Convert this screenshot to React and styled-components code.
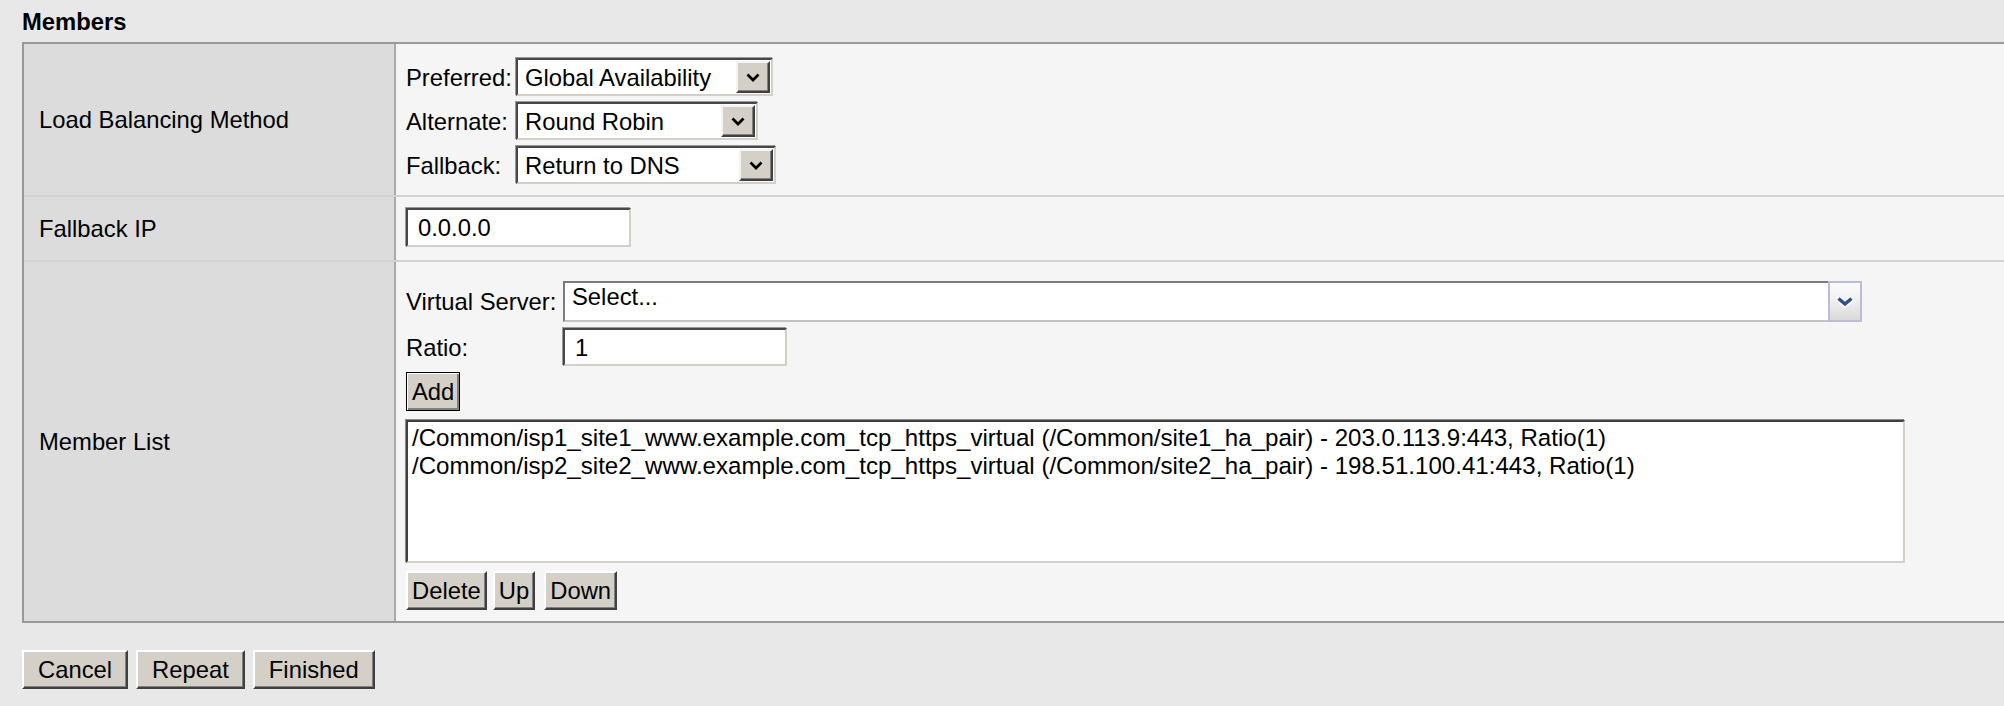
import React from 'react';
import styled, { createGlobalStyle } from 'styled-components';

const GlobalStyle = createGlobalStyle`
  html, body { margin: 0; padding: 0; background: #e8e8e8; }
  body {
    font-family: "Liberation Sans", Arial, sans-serif;
    font-size: 23.8px;
    color: #000;
  }
  * { box-sizing: border-box; }
`;

const Page = styled.div`
  padding: 8px 0 0 22px;
  min-height: 706px;
  overflow: hidden;
`;

const Title = styled.div`
  font-weight: bold;
  line-height: 27px;
  height: 27px;
  margin-bottom: 7px;
`;

const Table = styled.div`
  display: flex;
  flex-direction: column;
  border-top: 2px solid #999;
  border-left: 2px solid #999;
  border-bottom: 2px solid #999;
`;

const Row = styled.div`
  display: grid;
  grid-template-columns: 372px 1fr;
  border-bottom: 2px solid #d2d2d2;
  &:last-child { border-bottom: none; }
`;

const LabelCell = styled.div`
  background: #dcdcdc;
  border-right: 2px solid #a9a9a9;
  display: flex;
  align-items: center;
  padding-left: 15px;
  line-height: 27px;
`;

const ValueCell = styled.div`
  background: #f5f5f5;
  padding: ${p => p.$pad};
  display: flex;
  flex-direction: column;
  align-items: flex-start;
`;

const FieldGrid = styled.div`
  display: grid;
  grid-template-columns: ${p => p.$labelWidth}px auto;
  row-gap: 6px;
  align-items: center;
  justify-items: start;
`;

const FieldLabel = styled.span`
  line-height: 27px;
  white-space: nowrap;
`;

const ClassicSelect = styled.div`
  width: ${p => p.$width}px;
  height: 38px;
  display: flex;
  align-items: center;
  background: #fff;
  border: 2px solid;
  border-color: #474747 #d4d0c8 #d4d0c8 #474747;
  box-shadow: -1px -1px 0 #9a9a9a;
`;

const SelectText = styled.span`
  flex: 1;
  padding-left: 7px;
  line-height: 27px;
  white-space: nowrap;
  overflow: hidden;
`;

const ClassicDrop = styled.span`
  width: 34px;
  height: 32px;
  margin: 0 1px 0 0;
  display: flex;
  align-items: center;
  justify-content: center;
  background: #d4d0c8;
  border: 2px solid;
  border-color: #f4f4f4 #404040 #404040 #f4f4f4;
  box-shadow: inset -1px -1px 0 #808080;
`;

const ModernSelect = styled.div`
  width: ${p => p.$width}px;
  height: 41px;
  display: flex;
  align-items: stretch;
  background: #fff;
  border-top: 2px solid #7c7c7c;
  border-left: 2px solid #7c7c7c;
  border-bottom: 2px solid #c3c3c3;
  border-right: none;
`;

const ModernDrop = styled.span`
  width: 34px;
  display: flex;
  align-items: center;
  justify-content: center;
  margin-top: -2px;
  margin-bottom: -2px;
  border: 2px solid #bcbcd6;
  background: linear-gradient(#fbfbfb 0%, #f1f1f1 45%, #d9d9d9 100%);
`;

const ClassicInput = styled.div`
  width: ${p => p.$width}px;
  height: ${p => p.$height}px;
  display: flex;
  align-items: center;
  padding-left: 10px;
  background: #fff;
  border: 2px solid;
  border-color: #474747 #d4d0c8 #d4d0c8 #474747;
  box-shadow: -1px -1px 0 #9a9a9a;
  line-height: 27px;
`;

const ListBox = styled.div`
  width: 1499px;
  height: 143px;
  margin-top: 9px;
  background: #fff;
  border: 2px solid;
  border-color: #404040 #d4d0c8 #d4d0c8 #404040;
  box-shadow: -1px -1px 0 #8a8a8a;
  padding: 2px 4px;
  overflow: hidden;
`;

const ListItem = styled.div`
  font-size: 24.1px;
  line-height: 28px;
  white-space: nowrap;
`;

const Button = styled.button`
  font-family: inherit;
  font-size: 23.8px;
  color: #000;
  height: 39px;
  padding: 0 ${p => p.$padX || 4}px;
  margin: 0 0 0 ${p => p.$ml || 0}px;
  background: #d4d0c8;
  border: 2px solid;
  border-color: #fff #404040 #404040 #fff;
  box-shadow: inset -1px -1px 0 #808080;
  line-height: 27px;
  cursor: default;
`;

const DefaultButton = styled(Button)`
  border: 1px solid #000;
  padding: 0 5px;
  box-shadow: inset 1px 1px 0 #fff, inset -2px -2px 0 #808080;
  margin-top: 6px;
`;

const ButtonRow = styled.div`
  display: flex;
  gap: ${p => p.$gap}px;
  margin-top: ${p => p.$top}px;
`;

const ClassicChevron = () => (
  <svg width="14" height="9" viewBox="0 0 14 9">
    <path d="M1.5 1.5 L7 7 L12.5 1.5" fill="none" stroke="#000" strokeWidth="2.7" />
  </svg>
);

const BlueChevron = () => (
  <svg width="20" height="12" viewBox="0 0 20 12">
    <path d="M3 2.5 L10 8.5 L17 2.5" fill="none" stroke="#fff" strokeWidth="6" strokeLinejoin="miter" />
    <path d="M3.5 2.5 L10 8 L16.5 2.5" fill="none" stroke="#30508e" strokeWidth="3.6" strokeLinejoin="miter" />
  </svg>
);

const Select = ({ width, value }) => (
  <ClassicSelect $width={width}>
    <SelectText>{value}</SelectText>
    <ClassicDrop><ClassicChevron /></ClassicDrop>
  </ClassicSelect>
);

export default function App() {
  return (
    <>
      <GlobalStyle />
      <Page>
        <Title>Members</Title>
        <Table>
          <Row>
            <LabelCell>Load Balancing Method</LabelCell>
            <ValueCell $pad="14px 10px 11px">
              <FieldGrid $labelWidth={110}>
                <FieldLabel>Preferred:</FieldLabel>
                <Select width={257} value="Global Availability" />
                <FieldLabel>Alternate:</FieldLabel>
                <Select width={242} value="Round Robin" />
                <FieldLabel>Fallback:</FieldLabel>
                <Select width={260} value="Return to DNS" />
              </FieldGrid>
            </ValueCell>
          </Row>
          <Row>
            <LabelCell>Fallback IP</LabelCell>
            <ValueCell $pad="11px 10px 13px">
              <ClassicInput $width={225} $height={39}>0.0.0.0</ClassicInput>
            </ValueCell>
          </Row>
          <Row>
            <LabelCell>Member List</LabelCell>
            <ValueCell $pad="19px 10px 11px">
              <FieldGrid $labelWidth={157}>
                <FieldLabel>Virtual Server:</FieldLabel>
                <ModernSelect $width={1299}>
                  <SelectText>Select...</SelectText>
                  <ModernDrop><BlueChevron /></ModernDrop>
                </ModernSelect>
                <FieldLabel>Ratio:</FieldLabel>
                <ClassicInput $width={224} $height={38}>1</ClassicInput>
              </FieldGrid>
              <DefaultButton>Add</DefaultButton>
              <ListBox>
                <ListItem>/Common/isp1_site1_www.example.com_tcp_https_virtual (/Common/site1_ha_pair) - 203.0.113.9:443, Ratio(1)</ListItem>
                <ListItem>/Common/isp2_site2_www.example.com_tcp_https_virtual (/Common/site2_ha_pair) - 198.51.100.41:443, Ratio(1)</ListItem>
              </ListBox>
              <ButtonRow $gap={6} $top={8}>
                <Button>Delete</Button>
                <Button>Up</Button>
                <Button $ml={3}>Down</Button>
              </ButtonRow>
            </ValueCell>
          </Row>
        </Table>
        <ButtonRow $gap={8} $top={27}>
          <Button $padX={14}>Cancel</Button>
          <Button $padX={14}>Repeat</Button>
          <Button $padX={14}>Finished</Button>
        </ButtonRow>
      </Page>
    </>
  );
}
